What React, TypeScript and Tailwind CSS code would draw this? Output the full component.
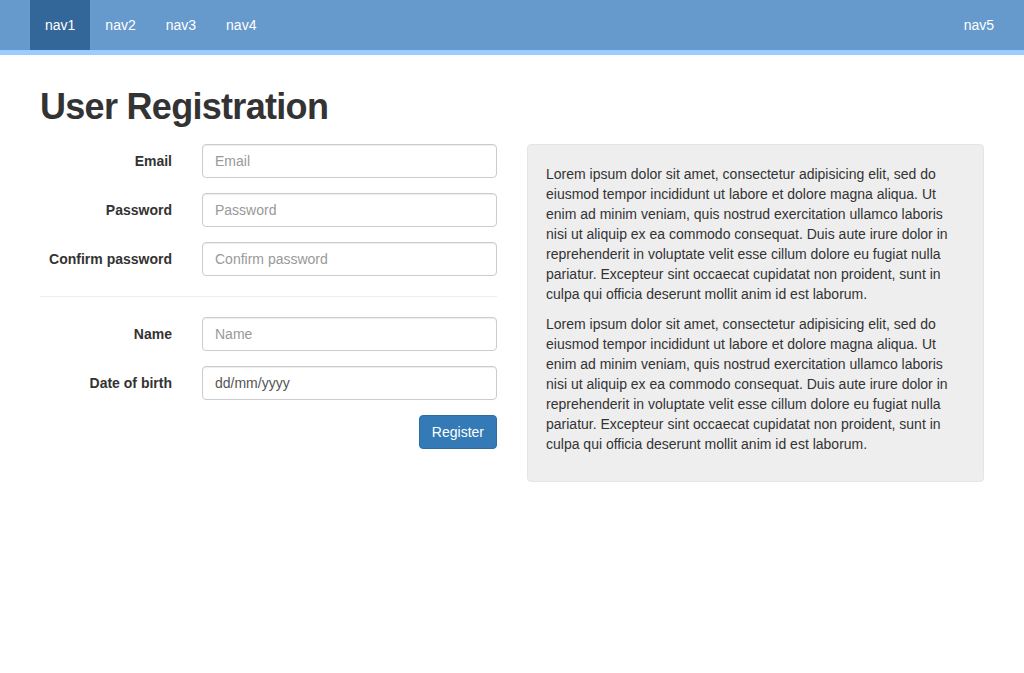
import React from "react";

const lorem =
  "Lorem ipsum dolor sit amet, consectetur adipisicing elit, sed do eiusmod tempor incididunt ut labore et dolore magna aliqua. Ut enim ad minim veniam, quis nostrud exercitation ullamco laboris nisi ut aliquip ex ea commodo consequat. Duis aute irure dolor in reprehenderit in voluptate velit esse cillum dolore eu fugiat nulla pariatur. Excepteur sint occaecat cupidatat non proident, sunt in culpa qui officia deserunt mollit anim id est laborum.";

function Field({ label, placeholder, value }: { label: string; placeholder?: string; value?: string }) {
  return (
    <div className="flex mb-[15px]">
      <label className="w-[132px] shrink-0 pt-[7px] text-right font-bold text-[14px] leading-[20px] text-[#333]">{label}</label>
      <div className="ml-[30px] flex-1">
        <input
          type="text"
          placeholder={placeholder}
          defaultValue={value}
          className="block w-full h-[34px] px-[12px] py-[6px] text-[14px] leading-[20px] text-[#555] border border-[#ccc] rounded-[4px] bg-white shadow-[inset_0_1px_1px_rgba(0,0,0,0.075)] placeholder:text-[#999] outline-none"
        />
      </div>
    </div>
  );
}

export default function App() {
  return (
    <div className="min-h-[673px] bg-white font-['Liberation_Sans',Arial,sans-serif] text-[14px] leading-[20px] text-[#333]">
      <nav className="h-[55px] bg-[#6699cc] border-b-[5px] border-[#99ccff] flex items-stretch pl-[30px] pr-[15px] text-white">
        <div className="flex">
          <a className="block px-[15px] leading-[50px] bg-[#336699]">nav1</a>
          <a className="block px-[15px] leading-[50px]">nav2</a>
          <a className="block px-[15px] leading-[50px]">nav3</a>
          <a className="block px-[15px] leading-[50px]">nav4</a>
        </div>
        <div className="ml-auto flex">
          <a className="block px-[15px] leading-[50px]">nav5</a>
        </div>
      </nav>
      <div className="px-[40px]">
        <h1 className="mt-[32px] mb-[17px] text-[36px] leading-[39.6px] font-bold tracking-[-0.7px] text-[#333]">User Registration</h1>
        <div className="flex gap-[30px]">
          <div className="w-[457px]">
            <Field label="Email" placeholder="Email" />
            <Field label="Password" placeholder="Password" />
            <Field label="Confirm password" placeholder="Confirm password" />
            <hr className="mt-[20px] mb-[20px] border-t border-[#eee]" />
            <Field label="Name" placeholder="Name" />
            <Field label="Date of birth" value="dd/mm/yyyy" />
            <div className="flex justify-end">
              <button className="h-[34px] px-[12px] text-[14px] leading-[20px] text-white bg-[#337ab7] border border-[#2e6da4] rounded-[4px]">
                Register
              </button>
            </div>
          </div>
          <div className="w-[457px] self-start bg-[#eeeeee] border border-[#e5e5e5] rounded-[4px] pl-[18px] pr-[19px] pt-[19px] pb-[17px] text-[#333]">
            <p className="mb-[10px]">{lorem}</p>
            <p className="mb-[10px]">{lorem}</p>
          </div>
        </div>
      </div>
    </div>
  );
}
